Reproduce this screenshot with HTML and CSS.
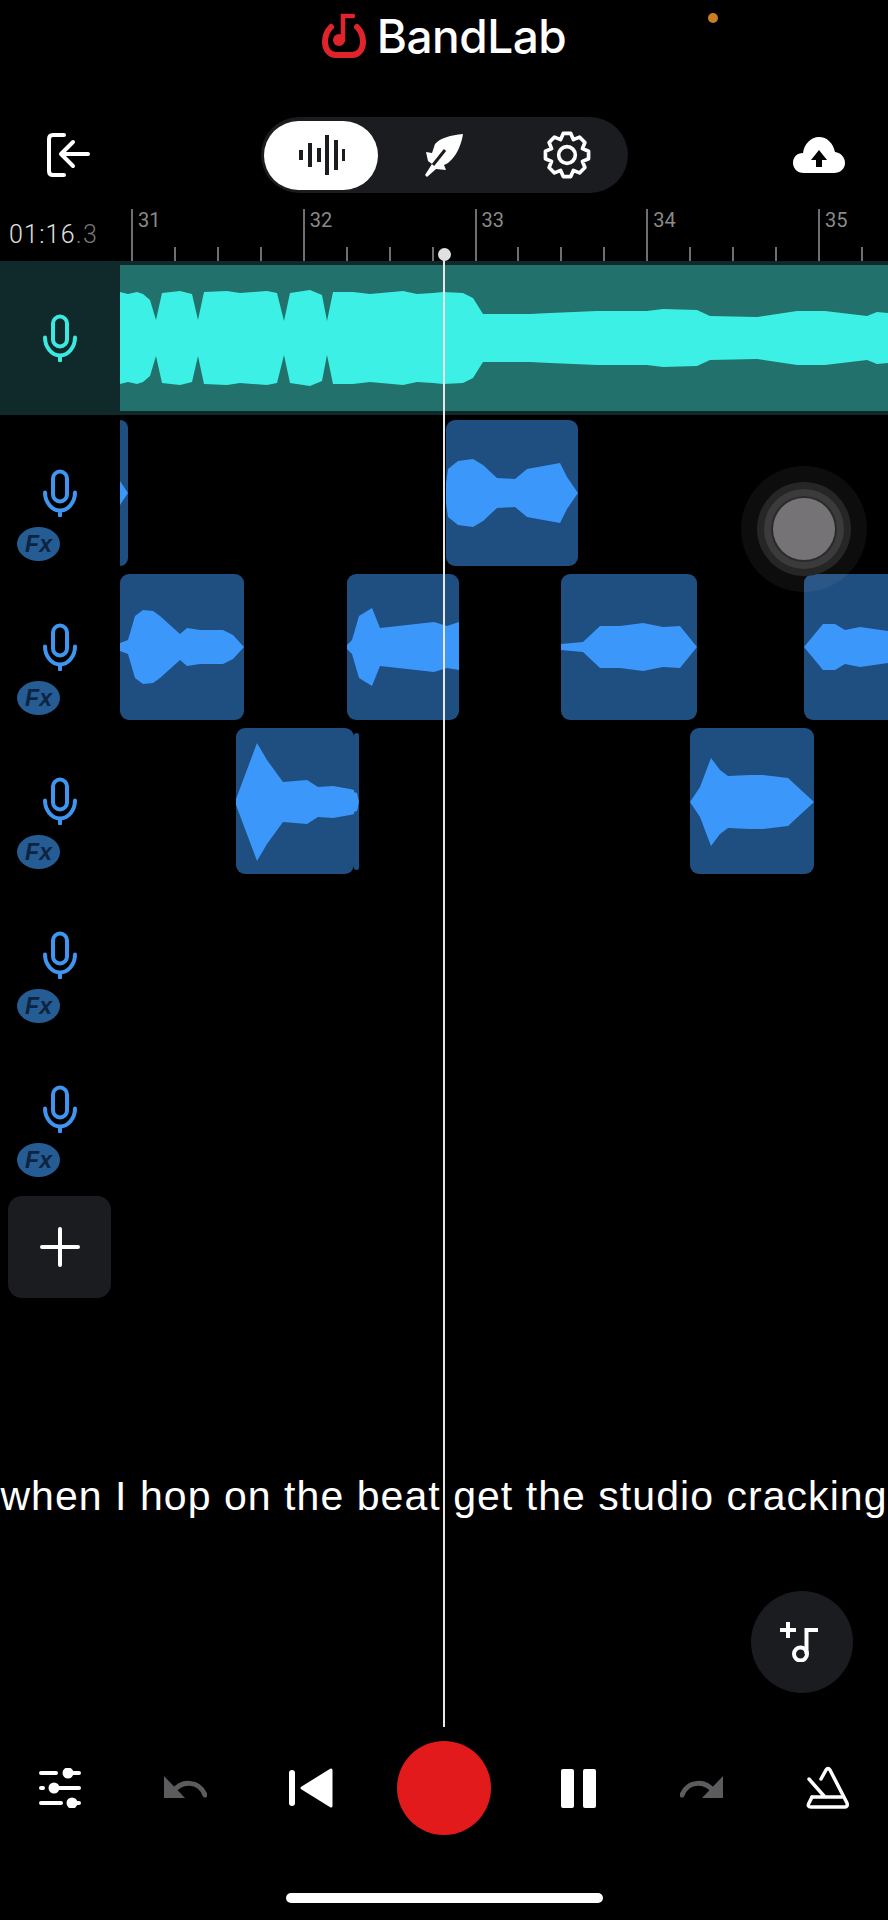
FILE: index.html
```html
<!DOCTYPE html>
<html lang="en">
<head>
    <meta charset="UTF-8">
    <meta name="viewport" content="width=device-width, initial-scale=1.0">
    <title>BandLab Studio</title>
    <link rel="stylesheet" href="styles.css">
</head>
<body>
    <div class="app">
        <span class="status-dot"></span>

        <header class="logo-bar">
            <svg class="logo-mark" viewBox="0 0 44 45" fill="none" stroke="#e0242b" stroke-width="6" stroke-linecap="round">
                <path d="M9 14C5 18 3 23 3 29C3 37 8 42 14 42H30C36 42 41 37 41 29C41 23 39 18 35 14"/>
                <path d="M31 3H21V27" stroke-width="4.500"/>
                <circle cx="17" cy="27" r="6" fill="#e0242b" stroke="none"/>
            </svg>
            <span class="logo-text">BandLab</span>
        </header>

        <nav class="toolbar">
            <svg class="exit-icon" viewBox="0 0 60 44" fill="none" stroke="#fff" stroke-width="4" stroke-linecap="round" stroke-linejoin="round">
                <path d="M24 2H13Q9 2 9 6V38Q9 42 13 42H24"/>
                <path d="M48 21H22M33 9L21 21L33 33"/>
            </svg>
            <div class="mode-switch">
                <div class="mode-tab mode-tab-on">
                    <svg class="bars-icon" viewBox="0 0 48 42" stroke="#1b1c1f" stroke-width="4">
                        <path d="M4 16V26M13 9V33M22 14V28M30 1V41M39 6V36M47 15V27"/>
                    </svg>
                </div>
                <div class="mode-tab">
                    <svg class="feather-icon" viewBox="0 0 42 46">
                        <path fill="#fff" d="M40 2C28 3 17 6 12 12L9 21 3 20 5 29 9 32 2 43 4 45 13 37 23 38 21 33C30 30 38 16 40 2Z"/>
                        <path fill="none" stroke="#1b1c1f" stroke-width="3" d="M10 33L22 18"/>
                    </svg>
                </div>
                <div class="mode-tab">
                    <svg class="gear-icon" viewBox="0 0 48 48" fill="none" stroke="#fff" stroke-width="3.500" stroke-linejoin="round">
                        <polygon points="44.700,20.400 44.700,27.600 38.800,30.100 41.200,36 36,41.200 30.100,38.800 27.600,44.700 20.400,44.700 17.900,38.800 12,41.200 6.800,36 9.200,30.100 3.300,27.600 3.300,20.400 9.200,17.900 6.800,12 12,6.800 17.900,9.200 20.400,3.300 27.600,3.300 30.100,9.200 36,6.800 41.200,12 38.800,17.900"/>
                        <circle cx="24" cy="24" r="8"/>
                    </svg>
                </div>
            </div>
            <svg class="cloud-icon" viewBox="0 0 54 38">
                <path fill="#fff" d="M12 37C5 37 1 32 1 27 1 21 5 17 11 17 12 8 19 1 27 1 35 1 41 7 43 16 49 17 53 21 53 27 53 33 48 37 42 37Z"/>
                <polygon fill="#000" points="27,14 35,24 30,24 30,31 24,31 24,24 19,24"/>
            </svg>
        </nav>

        <div class="ruler">
            <div class="time">01:16<span class="time-dim">.3</span></div>
            <div class="bars">
                <div class="bar"><span class="beat beat-major">31</span><span class="beat"></span><span class="beat"></span><span class="beat"></span></div>
                <div class="bar"><span class="beat beat-major">32</span><span class="beat"></span><span class="beat"></span><span class="beat"></span></div>
                <div class="bar"><span class="beat beat-major">33</span><span class="beat"></span><span class="beat"></span><span class="beat"></span></div>
                <div class="bar"><span class="beat beat-major">34</span><span class="beat"></span><span class="beat"></span><span class="beat"></span></div>
                <div class="bar"><span class="beat beat-major">35</span><span class="beat"></span><span class="beat"></span><span class="beat"></span></div>
            </div>
        </div>

        <section class="tracks">
            <div class="track track-active">
                <div class="track-head">
                    <svg class="mic" viewBox="0 0 34 47" fill="none" stroke="#3de8e0" stroke-width="4" stroke-linecap="round">
                        <rect x="10" y="2" width="14" height="30" rx="7"/>
                        <path d="M2 23C2 33 9 41 17 41S32 33 32 23M17 41V46"/>
                    </svg>
                </div>
                <div class="lane">
                    <div class="clip-rec">
                        <svg class="wave" viewBox="0 0 768 146" preserveAspectRatio="none">
                            <polygon fill="#3df0e6" points="0,27 8,29 17,27 23,29 30,35 36,55 42,28 60,26 72,29 78,55 84,27 107,26 120,28 147,26 157,28 164,56 170,28 190,25 202,30 207,56 213,27 233,27 250,29 283,26 297,29 313,28 323,27 343,28 353,33 363,49 410,49 430,48 477,46 527,46 543,44 577,45 590,51 637,52 677,46 705,46 747,51 757,47 768,48 768,98 757,99 747,95 705,100 677,100 637,94 590,95 577,101 543,102 527,100 477,100 430,98 410,97 363,97 353,113 343,118 323,119 313,118 297,117 283,120 250,117 233,119 213,119 207,90 202,116 190,121 170,118 164,90 157,118 147,120 120,118 107,120 84,119 78,91 72,117 60,120 42,118 36,91 30,111 23,117 17,119 8,117 0,119"/>
                        </svg>
                    </div>
                </div>
            </div>

            <div class="track">
                <div class="track-head">
                    <svg class="mic" viewBox="0 0 34 47" fill="none" stroke="#3f96f0" stroke-width="4" stroke-linecap="round">
                        <rect x="10" y="2" width="14" height="30" rx="7"/>
                        <path d="M2 23C2 33 9 41 17 41S32 33 32 23M17 41V46"/>
                    </svg>
                    <span class="fx">Fx</span>
                </div>
                <div class="lane">
                    <div class="clip clip-2a">
                        <svg class="wave" viewBox="0 0 8 146" preserveAspectRatio="none"><polygon points="0,61 8,73 0,85"/></svg>
                    </div>
                    <div class="clip clip-2b">
                        <svg class="wave" viewBox="0 0 132 146" preserveAspectRatio="none"><polygon points="0,63 2,49 12,41 27,39 37,45 51,58 69,59 81,49 114,43 121,57 132,73 121,89 114,103 81,97 69,87 51,88 37,101 27,107 12,105 2,97 0,83"/></svg>
                    </div>
                </div>
            </div>

            <div class="track">
                <div class="track-head">
                    <svg class="mic" viewBox="0 0 34 47" fill="none" stroke="#3f96f0" stroke-width="4" stroke-linecap="round">
                        <rect x="10" y="2" width="14" height="30" rx="7"/>
                        <path d="M2 23C2 33 9 41 17 41S32 33 32 23M17 41V46"/>
                    </svg>
                    <span class="fx">Fx</span>
                </div>
                <div class="lane">
                    <div class="clip clip-3a">
                        <svg class="wave" viewBox="0 0 124 146" preserveAspectRatio="none"><polygon points="0,69 8,66 15,42 23,36 33,37 40,42 60,60 67,54 80,56 103,56 113,61 124,73 113,85 103,90 80,90 67,92 60,86 40,104 33,109 23,110 15,104 8,80 0,77"/></svg>
                    </div>
                    <div class="clip clip-3b">
                        <svg class="wave" viewBox="0 0 112 146" preserveAspectRatio="none"><polygon points="0,71 5,66 12,42 25,34 33,54 87,48 100,52 112,48 112,96 100,94 87,98 33,92 25,112 12,104 5,80 0,75"/></svg>
                    </div>
                    <div class="clip clip-3c">
                        <svg class="wave" viewBox="0 0 136 146" preserveAspectRatio="none"><polygon points="0,70 22,68 39,52 59,52 82,49 102,53 119,52 136,73 119,94 102,93 82,97 59,94 39,94 22,78 0,76"/></svg>
                    </div>
                    <div class="clip clip-3d">
                        <svg class="wave" viewBox="0 0 84 146" preserveAspectRatio="none"><polygon points="0,73 19,50 31,50 41,56 56,53 84,57 84,89 56,93 41,90 31,96 19,96"/></svg>
                    </div>
                </div>
            </div>

            <div class="track">
                <div class="track-head">
                    <svg class="mic" viewBox="0 0 34 47" fill="none" stroke="#3f96f0" stroke-width="4" stroke-linecap="round">
                        <rect x="10" y="2" width="14" height="30" rx="7"/>
                        <path d="M2 23C2 33 9 41 17 41S32 33 32 23M17 41V46"/>
                    </svg>
                    <span class="fx">Fx</span>
                </div>
                <div class="lane">
                    <div class="clip clip-4a">
                        <svg class="wave" viewBox="0 0 118 146" preserveAspectRatio="none"><polygon points="0,71 21,15 31,32 47,54 71,52 82,59 97,58 114,61 118,62 118,86 114,87 97,90 82,89 71,96 47,94 31,116 21,133 0,77"/></svg>
                    </div>
                    <div class="clip clip-4b">
                        <svg class="wave" viewBox="0 0 5 137" preserveAspectRatio="none"><polygon points="0,59 3,60 5,69 3,78 0,79"/></svg>
                    </div>
                    <div class="clip clip-4c">
                        <svg class="wave" viewBox="0 0 124 146" preserveAspectRatio="none"><polygon points="0,74 10,59 21,30 30,42 38,48 60,47 73,47 98,50 124,74 98,98 73,101 60,101 38,100 30,106 21,118 10,89"/></svg>
                    </div>
                </div>
            </div>

            <div class="track">
                <div class="track-head">
                    <svg class="mic" viewBox="0 0 34 47" fill="none" stroke="#3f96f0" stroke-width="4" stroke-linecap="round">
                        <rect x="10" y="2" width="14" height="30" rx="7"/>
                        <path d="M2 23C2 33 9 41 17 41S32 33 32 23M17 41V46"/>
                    </svg>
                    <span class="fx">Fx</span>
                </div>
                <div class="lane"></div>
            </div>

            <div class="track">
                <div class="track-head">
                    <svg class="mic" viewBox="0 0 34 47" fill="none" stroke="#3f96f0" stroke-width="4" stroke-linecap="round">
                        <rect x="10" y="2" width="14" height="30" rx="7"/>
                        <path d="M2 23C2 33 9 41 17 41S32 33 32 23M17 41V46"/>
                    </svg>
                    <span class="fx">Fx</span>
                </div>
                <div class="lane"></div>
            </div>
        </section>

        <button class="add-track" type="button">
            <svg viewBox="0 0 40 40" stroke="#fff" stroke-width="4" stroke-linecap="round"><path d="M2 20H38M20 2V38"/></svg>
        </button>

        <p class="lyric">when I hop on the beat get the studio cracking</p>

        <button class="music-btn" type="button">
            <svg viewBox="0 0 46 40" fill="none" stroke="#fff" stroke-width="4">
                <path d="M1 8H17M9 0V16"/>
                <path d="M39 8H27.500V32"/>
                <circle cx="21.500" cy="32" r="6.500"/>
            </svg>
        </button>

        <div class="transport">
            <svg class="t-icon sliders" viewBox="0 0 42 40" fill="#fff" stroke="#fff" stroke-width="4" stroke-linecap="round">
                <path d="M2 5H17M29 5H40M2 20H4M15 20H40M2 35H22M33 35H40"/>
                <circle cx="29" cy="5" r="3.500"/>
                <circle cx="15" cy="20" r="3.500"/>
                <circle cx="33" cy="35" r="3.500"/>
            </svg>
            <svg class="t-icon undo" viewBox="0 0 44 24">
                <polygon fill="#5c5c5e" points="1,0 1,22 22,22"/>
                <path fill="none" stroke="#5c5c5e" stroke-width="5" stroke-linecap="round" d="M10 16C18 4 36 4 42 19"/>
            </svg>
            <svg class="t-icon prev" viewBox="0 0 44 40" fill="#fff">
                <rect x="0" y="2" width="6" height="36" rx="3"/>
                <polygon stroke="#fff" stroke-width="3" stroke-linejoin="round" points="13,20 42,2 42,38"/>
            </svg>
            <button class="record" type="button"></button>
            <svg class="t-icon pause" viewBox="0 0 35 40" fill="#fff">
                <rect x="0" y="1" width="13" height="39" rx="2"/>
                <rect x="22" y="1" width="13" height="39" rx="2"/>
            </svg>
            <svg class="t-icon redo" viewBox="0 0 44 24">
                <polygon fill="#5c5c5e" points="43,0 43,22 22,22"/>
                <path fill="none" stroke="#5c5c5e" stroke-width="5" stroke-linecap="round" d="M34 16C26 4 8 4 2 19"/>
            </svg>
            <svg class="t-icon metronome" viewBox="0 0 44 44" fill="none" stroke="#fff" stroke-width="3.500" stroke-linecap="round" stroke-linejoin="round">
                <path d="M15 13L20 4Q22 1 24 4L41 37Q42 41 39 41H5Q1 41 3 37L6 31"/>
                <path d="M6 31H36M3 13L18 30"/>
            </svg>
        </div>

        <div class="home-bar"></div>

        <div class="joystick"></div>
        <div class="playhead"></div>
    </div>
</body>
</html>
```

FILE: styles.css
```css
* {
    box-sizing: border-box;
}
body {
    margin: 0;
    background: #000;
    font-family: 'Liberation Sans', Arial, sans-serif;
}
svg {
    display: block;
}
button {
    border: none;
    padding: 0;
}
.app {
    position: relative;
    width: 888px;
    height: 1920px;
    overflow: hidden;
    display: flex;
    flex-direction: column;
    background: #000;
    color: #fff;
}
.status-dot {
    position: absolute;
    left: 708px;
    top: 13px;
    width: 10px;
    height: 10px;
    border-radius: 50%;
    background: #c97f20;
}

/* top */
.logo-bar {
    height: 117px;
    padding-top: 13px;
    display: flex;
    justify-content: center;
    align-items: flex-start;
    gap: 11px;
}
.logo-mark {
    width: 44px;
    height: 45px;
}
.logo-text {
    font-family: Inter, sans-serif;
    font-weight: 500;
    font-size: 46px;
    line-height: 47px;
    letter-spacing: -0.5px;
}
.toolbar {
    height: 76px;
    padding: 0 40px;
    display: grid;
    grid-template-columns: 1fr auto 1fr;
    align-items: center;
}
.exit-icon {
    width: 60px;
    height: 44px;
}
.cloud-icon {
    width: 54px;
    height: 38px;
    justify-self: end;
    margin-right: 2px;
}
.mode-switch {
    width: 367px;
    height: 76px;
    padding: 0 4px 0 3px;
    border-radius: 38px;
    background: #1b1c1f;
    display: grid;
    grid-template-columns: 114px 132px 114px;
    align-items: center;
    justify-items: center;
}
.mode-tab {
    height: 69px;
    width: 114px;
    display: flex;
    justify-content: center;
    align-items: center;
}
.mode-tab-on {
    background: #fff;
    border-radius: 35px;
}
.bars-icon {
    width: 48px;
    height: 42px;
}
.feather-icon {
    width: 42px;
    height: 46px;
}
.gear-icon {
    width: 50px;
    height: 50px;
}

/* ruler */
.ruler {
    margin-top: 16px;
    height: 52px;
    display: flex;
}
.time {
    flex: 0 0 131px;
    padding: 12px 0 0 9px;
    font-family: Roboto, sans-serif;
    font-weight: 300;
    font-size: 25px;
    line-height: 28px;
    letter-spacing: 1.2px;
    color: #e0e0e0;
}
.time-dim {
    color: #777;
}
.bars {
    display: flex;
    overflow: hidden;
    flex: 1;
}
.bar {
    flex: 0 0 171.75px;
    display: flex;
    align-items: flex-end;
}
.beat {
    flex: 0 0 25%;
    height: 14px;
    border-left: 2px solid #6f6f6f;
}
.beat-major {
    height: 52px;
    padding: 1px 0 0 5px;
    font-family: Roboto, sans-serif;
    font-size: 20px;
    line-height: 20px;
    color: #8a8a8a;
}

/* tracks */
.track {
    height: 154px;
    display: flex;
}
.track-active {
    margin-bottom: 1px;
    background: #10292a;
}
.track-head {
    flex: 0 0 120px;
    padding-top: 53px;
    display: flex;
    flex-direction: column;
}
.mic {
    width: 34px;
    height: 48px;
    margin-left: 43px;
}
.fx {
    width: 43px;
    height: 34px;
    margin: 10px 0 0 17px;
    border-radius: 50%;
    background: #265c94;
    color: #0d2440;
    font-style: italic;
    font-weight: 700;
    font-size: 23px;
    line-height: 34px;
    text-align: center;
}
.lane {
    position: relative;
    flex: 1;
}
.clip-rec {
    height: 146px;
    margin-top: 4px;
    background: #23716c;
}
.clip {
    position: absolute;
    top: 4px;
    height: 146px;
    background: #1f4e80;
    border-radius: 9px;
    overflow: hidden;
}
.wave {
    width: 100%;
    height: 100%;
}
.clip polygon {
    fill: #3c97fb;
}
.clip-2a { left: 0; width: 8px; border-radius: 0 9px 9px 0; }
.clip-2b { left: 326px; width: 132px; }
.clip-3a { left: 0; width: 124px; }
.clip-3b { left: 227px; width: 112px; }
.clip-3c { left: 441px; width: 136px; }
.clip-3d { left: 684px; width: 84px; border-radius: 9px 0 0 9px; }
.clip-4a { left: 116px; width: 118px; }
.clip-4b { left: 234px; width: 5px; top: 9px; height: 137px; border-radius: 3px; }
.clip-4c { left: 570px; width: 124px; }

.add-track {
    width: 103px;
    height: 102px;
    margin: 10px 0 0 8px;
    border-radius: 14px;
    background: #1b1c1f;
    display: flex;
    justify-content: center;
    align-items: center;
}
.add-track svg {
    width: 40px;
    height: 40px;
}
.lyric {
    margin: 175px 0 0;
    font-size: 41px;
    line-height: 46px;
    letter-spacing: 1.05px;
    white-space: nowrap;
    text-align: center;
}
.music-btn {
    align-self: flex-end;
    width: 102px;
    height: 102px;
    margin: 72px 35px 0 0;
    border-radius: 50%;
    background: #1b1c20;
    display: flex;
    justify-content: center;
    align-items: center;
}
.music-btn svg {
    width: 46px;
    height: 40px;
}

/* transport */
.transport {
    height: 94px;
    margin-top: 48px;
    display: grid;
    grid-template-columns: 120px 130px 122px 144px 124px 124px 124px;
    align-items: center;
    justify-items: center;
}
.sliders { width: 42px; height: 40px; }
.undo, .redo { width: 44px; height: 24px; }
.prev { width: 44px; height: 40px; }
.pause { width: 35px; height: 40px; }
.metronome {
    width: 44px;
    height: 44px;
    justify-self: end;
    margin-right: 38px;
}
.record {
    width: 94px;
    height: 94px;
    border-radius: 50%;
    background: #e21a1c;
}
.home-bar {
    width: 317px;
    height: 10px;
    margin: 58px 0 0 286px;
    border-radius: 5px;
    background: #fff;
}

/* overlays */
.joystick {
    position: absolute;
    left: 773px;
    top: 498px;
    width: 62px;
    height: 62px;
    border-radius: 50%;
    background: #757375;
    box-shadow: 0 0 0 2px #2a2a2a, 0 0 0 9px #3b3b3b, 0 0 0 16px #262626, 0 0 0 32px rgba(255, 255, 255, 0.05);
}
.playhead {
    position: absolute;
    left: 443px;
    top: 254px;
    width: 2px;
    height: 1473px;
    background: #e8e8e8;
}
.playhead::before {
    content: "";
    position: absolute;
    left: -5.500px;
    top: -6px;
    width: 13px;
    height: 13px;
    border-radius: 50%;
    background: #e0e0e0;
}
```
